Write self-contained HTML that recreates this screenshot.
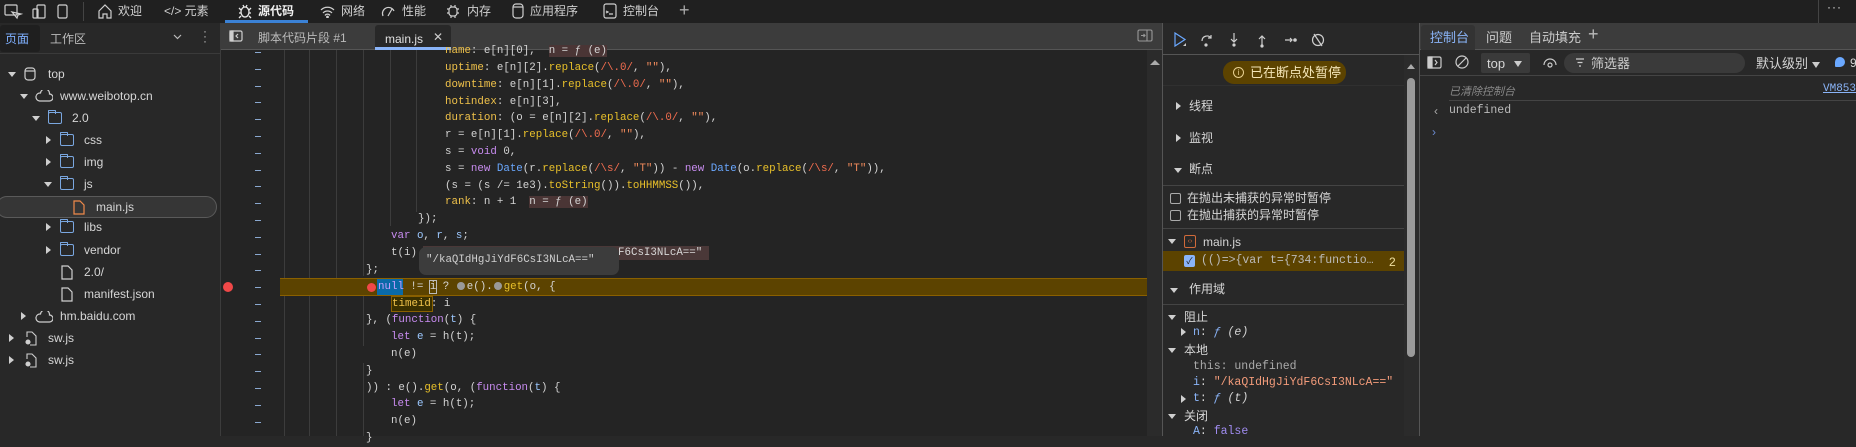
<!DOCTYPE html>
<html><head><meta charset="utf-8">
<style>
*{box-sizing:border-box;margin:0;padding:0}
body{width:1856px;height:436px;overflow:hidden;background:#282828;font-family:"Liberation Sans","Noto Sans CJK SC",sans-serif;color:#d6d6d6;position:relative;font-size:12px}
.a{position:absolute;white-space:nowrap}
.ui{font-size:12px;line-height:14px}
.code{position:absolute;font-family:"Liberation Mono",monospace;font-size:10.8px;line-height:16.8px;white-space:pre;color:#d4d4d4}
.k{color:#c88cf0}.p{color:#f0c24a}.m{color:#e8c02a}.r{color:#f26d4f}.s{color:#f28b5c}.b{color:#6aa8ff}.v{color:#9cc8ff}
.dash{position:absolute;left:255px;width:6px;height:1px;background:#8aa8d0}
.guide{position:absolute;width:1px;background:#3c3c3c}
.tri{position:absolute;width:0;height:0;border-left:5px solid #cfcfcf;border-top:4px solid transparent;border-bottom:4px solid transparent}
.trid{position:absolute;width:0;height:0;border-top:5px solid #cfcfcf;border-left:4px solid transparent;border-right:4px solid transparent}
.fold{position:absolute;width:14px;height:12px;border:1.3px solid #7aa7e0;border-radius:2px}
.fold:before{content:"";position:absolute;left:-1px;top:-3px;width:6px;height:3px;border:1.3px solid #7aa7e0;border-bottom:none;border-radius:1px 1px 0 0}
.dot{display:inline-block;width:8px;height:8px;border-radius:50%;background:#999;margin:0 2px 0 1px;vertical-align:-1px}
svg{position:absolute}
</style></head><body>
<!-- top bar -->
<div class="a" style="left:0;top:0;width:1856px;height:23px;background:#202020"></div>
<svg style="left:4px;top:4px" width="76" height="16" fill="none" stroke="#cfcfcf" stroke-width="1.2">
<rect x="1" y="1" width="12" height="10" rx="1"/><path d="M8 8l5 6 1-3 3-1z"/>
<rect x="33" y="1" width="8" height="13" rx="1"/><rect x="29" y="5" width="5" height="9" rx="1"/>
<rect x="54" y="1" width="9" height="13" rx="1.5"/></svg>
<div class="a" style="left:83px;top:2px;width:1px;height:19px;background:#444"></div>
<svg style="left:98px;top:4px" width="14" height="15" fill="none" stroke="#cfcfcf" stroke-width="1.2"><path d="M1 7l6-6 6 6v7H9v-4H5v4H1z"/></svg>
<div class="a ui" style="left:118px;top:4px;color:#cfcfcf">欢迎</div>
<div class="a ui" style="left:164px;top:4px;color:#cfcfcf">&lt;/&gt; 元素</div>
<svg style="left:238px;top:3px" width="14" height="16" fill="none" stroke="#e8e8e8" stroke-width="1.3"><ellipse cx="7" cy="9" rx="4" ry="5"/><path d="M1 5l2 2M13 5l-2 2M1 10h2M11 10h2M1 15l2-2M13 15l-2-2M5 2l1 2M9 2l-1 2"/></svg>
<div class="a ui" style="left:258px;top:4px;color:#f0f0f0;font-weight:bold">源代码</div>
<div class="a" style="left:225px;top:20px;width:83px;height:3px;background:#3b82d6"></div>
<svg style="left:320px;top:5px" width="15" height="13" fill="none" stroke="#cfcfcf" stroke-width="1.2"><path d="M1 5a9 9 0 0 1 13 0M3 8a6 6 0 0 1 9 0M5 10.5a3 3 0 0 1 5 0"/><circle cx="7.5" cy="12" r="0.8" fill="#cfcfcf"/></svg>
<div class="a ui" style="left:341px;top:4px;color:#cfcfcf">网络</div>
<svg style="left:381px;top:5px" width="15" height="13" fill="none" stroke="#cfcfcf" stroke-width="1.2"><path d="M2 11a6 6 0 0 1 11-5M7 11l4-7"/></svg>
<div class="a ui" style="left:402px;top:4px;color:#cfcfcf">性能</div>
<svg style="left:446px;top:4px" width="14" height="15" fill="none" stroke="#cfcfcf" stroke-width="1.2"><rect x="3" y="3" width="8" height="9" rx="3"/><path d="M1 5h2M1 9h2M11 5h2M11 9h2M5 1v2M9 1v2M5 12v2M9 12v2"/></svg>
<div class="a ui" style="left:467px;top:4px;color:#cfcfcf">内存</div>
<svg style="left:512px;top:3px" width="12" height="16" fill="none" stroke="#cfcfcf" stroke-width="1.2"><rect x="1" y="1" width="10" height="14" rx="3"/><path d="M1 4h10"/></svg>
<div class="a ui" style="left:530px;top:4px;color:#cfcfcf">应用程序</div>
<svg style="left:603px;top:3px" width="14" height="16" fill="none" stroke="#cfcfcf" stroke-width="1.2"><rect x="1" y="1" width="12" height="14" rx="2"/><path d="M3 10l2-1-2-1M6 11h4"/></svg>
<div class="a ui" style="left:623px;top:4px;color:#cfcfcf">控制台</div>
<div class="a" style="left:679px;top:0px;font-size:18px;color:#aaa">+</div>
<div class="a" style="left:1818px;top:0;width:1px;height:23px;background:#444"></div>
<div class="a" style="left:1827px;top:0;color:#ddd;font-size:12px;letter-spacing:1px">···</div>

<!-- left panel -->
<div class="a" style="left:0;top:23px;width:220px;height:413px;background:#282828"></div>
<div class="a" style="left:0;top:25px;width:40px;height:27px;background:#1f1f1f;border-radius:3px"></div>
<div class="a ui" style="left:5px;top:32px;color:#7fb0ff">页面</div>
<div class="a ui" style="left:50px;top:32px;color:#bbb">工作区</div>
<svg style="left:173px;top:34px" width="9" height="6" fill="none" stroke="#bbb" stroke-width="1.2"><path d="M1 1l3.5 3.5L8 1"/></svg>
<div class="a" style="left:203px;top:29px;color:#bbb;font-size:12px;line-height:5px">·<br>·<br>·</div>
<div class="a" style="left:220px;top:23px;width:1px;height:413px;background:#3c3c3c"></div>
<div class="a" style="left:0;top:53px;width:220px;height:1px;background:#3a3a3a"></div>
<!-- tree -->
<div class="trid" style="left:8px;top:72px"></div>
<svg style="left:24px;top:67px" width="12" height="14" fill="none" stroke="#cfcfcf" stroke-width="1.2"><rect x="1" y="1" width="10" height="12" rx="3"/><path d="M1 4h10"/></svg>
<div class="a ui" style="left:48px;top:67px">top</div>
<div class="trid" style="left:20px;top:94px"></div>
<svg style="left:35px;top:90px" width="18" height="12" fill="none" stroke="#cfcfcf" stroke-width="1.2"><path d="M4.5 11h10a3.5 3.5 0 0 0 0-7 4.5 4.5 0 0 0-9-1A4 4 0 0 0 4.5 11z"/></svg>
<div class="a ui" style="left:60px;top:89px">www.weibotop.cn</div>
<div class="trid" style="left:32px;top:116px"></div>
<div class="fold" style="left:48px;top:112px"></div>
<div class="a ui" style="left:72px;top:111px">2.0</div>
<div class="tri" style="left:46px;top:136px"></div>
<div class="fold" style="left:60px;top:134px"></div>
<div class="a ui" style="left:84px;top:133px">css</div>
<div class="tri" style="left:46px;top:158px"></div>
<div class="fold" style="left:60px;top:156px"></div>
<div class="a ui" style="left:84px;top:155px">img</div>
<div class="trid" style="left:44px;top:182px"></div>
<div class="fold" style="left:60px;top:178px"></div>
<div class="a ui" style="left:84px;top:177px">js</div>
<div class="a" style="left:-4px;top:196px;width:221px;height:22px;background:#363636;border:1px solid #5a5a5a;border-radius:11px"></div>
<svg style="left:73px;top:200px" width="12" height="15" fill="none" stroke="#f08a4a" stroke-width="1.2"><path d="M1 1h6l4 4v9H1z"/></svg>
<div class="a ui" style="left:96px;top:200px">main.js</div>
<div class="tri" style="left:46px;top:223px"></div>
<div class="fold" style="left:60px;top:221px"></div>
<div class="a ui" style="left:84px;top:220px">libs</div>
<div class="tri" style="left:46px;top:246px"></div>
<div class="fold" style="left:60px;top:244px"></div>
<div class="a ui" style="left:84px;top:243px">vendor</div>
<svg style="left:61px;top:265px" width="12" height="15" fill="none" stroke="#cfcfcf" stroke-width="1.2"><path d="M1 1h6l4 4v9H1z"/></svg>
<div class="a ui" style="left:84px;top:265px">2.0/</div>
<svg style="left:61px;top:287px" width="12" height="15" fill="none" stroke="#cfcfcf" stroke-width="1.2"><path d="M1 1h6l4 4v9H1z"/></svg>
<div class="a ui" style="left:84px;top:287px">manifest.json</div>
<div class="tri" style="left:21px;top:312px"></div>
<svg style="left:35px;top:311px" width="18" height="12" fill="none" stroke="#cfcfcf" stroke-width="1.2"><path d="M4.5 11h10a3.5 3.5 0 0 0 0-7 4.5 4.5 0 0 0-9-1A4 4 0 0 0 4.5 11z"/></svg>
<div class="a ui" style="left:60px;top:309px">hm.baidu.com</div>
<div class="tri" style="left:9px;top:334px"></div>
<svg style="left:24px;top:331px" width="13" height="15" fill="none" stroke="#cfcfcf" stroke-width="1.1"><path d="M3 6V1h5l4 4v9H6"/><circle cx="4" cy="11" r="2" fill="#cfcfcf"/></svg>
<div class="a ui" style="left:48px;top:331px">sw.js</div>
<div class="tri" style="left:9px;top:356px"></div>
<svg style="left:24px;top:353px" width="13" height="15" fill="none" stroke="#cfcfcf" stroke-width="1.1"><path d="M3 6V1h5l4 4v9H6"/><circle cx="4" cy="11" r="2" fill="#cfcfcf"/></svg>
<div class="a ui" style="left:48px;top:353px">sw.js</div>

<!-- editor -->
<div class="a" style="left:221px;top:23px;width:941px;height:27px;background:#3c3c3c;border-bottom:1px solid #555"></div>
<svg style="left:229px;top:30px" width="14" height="12" fill="none" stroke="#cfcfcf" stroke-width="1.2"><rect x="1" y="1" width="12" height="10" rx="1.5"/><path d="M9 4l-2 2 2 2" /><path d="M1 1h3v10H1z" fill="#cfcfcf"/></svg>
<div class="a ui" style="left:258px;top:31px;color:#bbb">脚本代码片段 #1</div>
<div class="a" style="left:375px;top:25px;width:76px;height:25px;background:#282828;border-radius:3px 3px 0 0"></div>
<div class="a" style="left:375px;top:47px;width:76px;height:3px;background:#8ab4f8"></div>
<div class="a ui" style="left:385px;top:32px;color:#e0e0e0">main.js</div>
<div class="a" style="left:433px;top:30px;color:#ccc;font-size:12px">✕</div>
<svg style="left:1137px;top:29px" width="16" height="13" fill="none" stroke="#999" stroke-width="1.1"><rect x="1" y="1" width="14" height="11" rx="1.5"/><path d="M10 1v11" /><path d="M4 6.5h4M6.5 5l1.5 1.5L6.5 8"/></svg>
<div class="a" style="left:221px;top:50px;width:926px;height:386px;background:#242424"></div>
<div class="a" style="left:1147px;top:50px;width:15px;height:386px;background:#2b2b2b"></div>
<div class="a" style="left:1150px;top:60px;width:0;height:0;border-bottom:5px solid #aaa;border-left:5px solid transparent;border-right:5px solid transparent"></div>
<div class="a" style="left:1162px;top:23px;width:1px;height:413px;background:#555"></div>
<!-- guides -->
<div class="guide" style="left:284px;top:50px;height:386px"></div>
<div class="guide" style="left:309px;top:50px;height:386px"></div>
<div class="guide" style="left:336px;top:50px;height:386px"></div>
<div class="guide" style="left:363px;top:50px;height:226px"></div>
<div class="guide" style="left:390px;top:50px;height:176px"></div>
<div class="guide" style="left:416px;top:50px;height:162px"></div>
<div class="guide" style="left:363px;top:296px;height:50px"></div>
<div class="guide" style="left:363px;top:363px;height:73px"></div>
<!-- dashes -->
<div class="dash" style="top:52px"></div><div class="dash" style="top:69px"></div><div class="dash" style="top:86px"></div><div class="dash" style="top:102px"></div><div class="dash" style="top:119px"></div><div class="dash" style="top:136px"></div><div class="dash" style="top:153px"></div><div class="dash" style="top:170px"></div><div class="dash" style="top:186px"></div><div class="dash" style="top:203px"></div><div class="dash" style="top:220px"></div><div class="dash" style="top:237px"></div><div class="dash" style="top:254px"></div><div class="dash" style="top:270px"></div><div class="dash" style="top:287px"></div><div class="dash" style="top:304px"></div><div class="dash" style="top:321px"></div><div class="dash" style="top:338px"></div><div class="dash" style="top:354px"></div><div class="dash" style="top:371px"></div><div class="dash" style="top:388px"></div><div class="dash" style="top:405px"></div><div class="dash" style="top:422px"></div>
<!-- highlighted line -->
<div class="a" style="left:280px;top:278px;width:867px;height:18px;background:#5c4300;border-top:1px solid #8a6000;border-bottom:1px solid #8a6000"></div>
<div class="a" style="left:223px;top:282px;width:10px;height:10px;border-radius:50%;background:#f04848"></div>
<div class="a" style="left:377px;top:279px;width:26px;height:16px;background:#0a6aa8"></div>
<div class="a" style="left:391px;top:296px;width:42px;height:16px;border:1px solid #8a6000;background:#3a3000"></div>
<!-- code lines -->
<div class="code" style="left:445px;top:43px"><span class="p">name</span>: e[n][0],  <span style="background:#4a3535">n = ƒ (e)</span></div>
<div class="code" style="left:445px;top:60px"><span class="p">uptime</span>: e[n][2].<span class="m">replace</span>(<span class="r">/\.0/</span>, <span class="s">""</span>),</div>
<div class="code" style="left:445px;top:77px"><span class="p">downtime</span>: e[n][1].<span class="m">replace</span>(<span class="r">/\.0/</span>, <span class="s">""</span>),</div>
<div class="code" style="left:445px;top:94px"><span class="p">hotindex</span>: e[n][3],</div>
<div class="code" style="left:445px;top:110px"><span class="p">duration</span>: (o = e[n][2].<span class="m">replace</span>(<span class="r">/\.0/</span>, <span class="s">""</span>),</div>
<div class="code" style="left:445px;top:127px">r = e[n][1].<span class="m">replace</span>(<span class="r">/\.0/</span>, <span class="s">""</span>),</div>
<div class="code" style="left:445px;top:144px">s = <span class="k">void</span> 0,</div>
<div class="code" style="left:445px;top:161px">s = <span class="k">new</span> <span class="b">Date</span>(r.<span class="m">replace</span>(<span class="r">/\s/</span>, <span class="s">"T"</span>)) - <span class="k">new</span> <span class="b">Date</span>(o.<span class="m">replace</span>(<span class="r">/\s/</span>, <span class="s">"T"</span>)),</div>
<div class="code" style="left:445px;top:178px">(s = (s /= 1e3).<span class="m">toString</span>()).<span class="m">toHHMMSS</span>()),</div>
<div class="code" style="left:445px;top:194px"><span class="p">rank</span>: n + 1  <span style="background:#4a3535">n = ƒ (e)</span></div>
<div class="code" style="left:418px;top:211px">});</div>
<div class="code" style="left:391px;top:228px"><span class="k">var</span> <span class="v">o</span>, <span class="v">r</span>, <span class="v">s</span>;</div>
<div class="a" style="left:423px;top:246px;width:286px;height:14px;background:#4a3838"></div>
<div class="a" style="left:618px;top:246px;font-family:'Liberation Mono',monospace;font-size:10.8px;line-height:14px;color:#d8d8d8">F6CsI3NLcA=="</div>
<div class="code" style="left:391px;top:245px">t(i)</div>
<div class="code" style="left:366px;top:262px">};</div>
<div class="a" style="left:419px;top:247px;width:200px;height:28px;background:#3c3c3c;border-radius:7px"></div>
<div class="code" style="left:426px;top:252px;color:#cfcfcf">"/kaQIdHgJiYdF6CsI3NLcA=="</div>
<div class="a" style="left:367px;top:283px;width:9px;height:9px;border-radius:50%;background:#f04848"></div>
<div class="code" style="left:378px;top:279px"><span style="color:#c8a0ff">null</span> != <span style="outline:1px solid #bbb">i</span> ? <span class="dot"></span>e().<span class="dot"></span><span class="m">get</span>(o, {</div>
<div class="code" style="left:392px;top:296px"><span class="p">timeid</span>: i</div>
<div class="code" style="left:366px;top:312px">}, (<span class="k">function</span>(<span class="v">t</span>) {</div>
<div class="code" style="left:391px;top:329px"><span class="k">let</span> <span class="v">e</span> = h(t);</div>
<div class="code" style="left:391px;top:346px">n(e)</div>
<div class="code" style="left:366px;top:363px">}</div>
<div class="code" style="left:366px;top:380px">)) : e().<span class="m">get</span>(o, (<span class="k">function</span>(<span class="v">t</span>) {</div>
<div class="code" style="left:391px;top:396px"><span class="k">let</span> <span class="v">e</span> = h(t);</div>
<div class="code" style="left:391px;top:413px">n(e)</div>
<div class="code" style="left:366px;top:430px">}</div>

<!-- debugger panel -->
<div class="a" style="left:1163px;top:23px;width:256px;height:413px;background:#282828"></div>
<svg style="left:1172px;top:32px" width="160" height="16" fill="none" stroke="#cfcfcf" stroke-width="1.2">
<path d="M3 1v13l10-6.5z" stroke="#6aa8ff"/><path d="M11 14l3-3v3z" fill="#ccc" stroke="none"/>
<path d="M30 9a5 5 0 0 1 9-3M39 3v3h-3"/><circle cx="34" cy="13" r="1" fill="#ccc"/>
<path d="M62 1v9M59 7l3 3 3-3"/><circle cx="62" cy="13" r="1" fill="#ccc"/>
<path d="M90 13V4M87 7l3-3 3 3"/><circle cx="90" cy="14" r="1" fill="#ccc"/>
<path d="M113 8h7M118 6l2 2-2 2"/><circle cx="123" cy="8" r="1.2" fill="#ccc"/>
<circle cx="146" cy="8" r="5.5"/><path d="M142 2l8 12"/></svg>
<div class="a" style="left:1163px;top:54px;width:256px;height:1px;background:#555"></div>
<div class="a" style="left:1404px;top:55px;width:15px;height:381px;background:#2b2b2b"></div>
<div class="a" style="left:1407px;top:78px;width:8px;height:279px;border-radius:4px;background:#9a9a9a"></div>
<div class="a" style="left:1407px;top:64px;width:0;height:0;border-bottom:5px solid #aaa;border-left:4px solid transparent;border-right:4px solid transparent"></div>
<div class="a" style="left:1223px;top:61px;width:123px;height:23px;border-radius:11px;background:#5c4300"></div>
<div class="a" style="left:1233px;top:67px;width:11px;height:11px;border:1px solid #e8d090;border-radius:50%;font-size:8px;line-height:9px;text-align:center;color:#e8d090">i</div>
<div class="a ui" style="left:1250px;top:66px;color:#f4e6b8;font-size:13px">已在断点处暂停</div>
<div class="a" style="left:1163px;top:85px;width:241px;height:1px;background:#303030"></div>
<div class="tri" style="left:1176px;top:102px"></div><div class="a ui" style="left:1189px;top:99px">线程</div>
<div class="tri" style="left:1176px;top:134px"></div><div class="a ui" style="left:1189px;top:131px">监视</div>
<div class="trid" style="left:1174px;top:168px"></div><div class="a ui" style="left:1189px;top:162px">断点</div>
<div class="a" style="left:1163px;top:185px;width:241px;height:1px;background:#444"></div>
<div class="a" style="left:1170px;top:193px;width:11px;height:11px;border:1px solid #aaa;border-radius:2px"></div>
<div class="a ui" style="left:1187px;top:191px;font-size:12px">在抛出未捕获的异常时暂停</div>
<div class="a" style="left:1170px;top:210px;width:11px;height:11px;border:1px solid #aaa;border-radius:2px"></div>
<div class="a ui" style="left:1187px;top:208px;font-size:12px">在抛出捕获的异常时暂停</div>
<div class="a" style="left:1163px;top:228px;width:241px;height:1px;background:#444"></div>
<div class="trid" style="left:1168px;top:239px"></div>
<div class="a" style="left:1184px;top:235px;width:12px;height:13px;border:1px solid #d06a3a;border-radius:2px;font-size:7px;color:#d06a3a;text-align:center;line-height:11px">‹›</div>
<div class="a ui" style="left:1203px;top:235px">main.js</div>
<div class="a" style="left:1163px;top:251px;width:241px;height:20px;background:#5c4300"></div>
<div class="a" style="left:1184px;top:255px;width:11px;height:12px;background:#8ab4f8;border-radius:2px;color:#1a1a1a;font-size:9px;line-height:12px;text-align:center">✓</div>
<div class="a" style="left:1201px;top:254px;font-family:'Liberation Mono',monospace;font-size:11.5px;color:#bbb">(()=&gt;{var t={734:functio…</div>
<div class="a ui" style="left:1389px;top:255px;color:#f0e0a0">2</div>
<div class="trid" style="left:1170px;top:288px"></div><div class="a ui" style="left:1189px;top:282px">作用域</div>
<div class="a" style="left:1163px;top:304px;width:241px;height:1px;background:#444"></div>
<div class="trid" style="left:1168px;top:315px"></div><div class="a ui" style="left:1184px;top:310px">阻止</div>
<div class="tri" style="left:1181px;top:328px"></div>
<div class="a" style="left:1193px;top:326px;font-family:'Liberation Mono',monospace;font-size:11.5px"><span style="color:#8ab4f8">n</span>: <i style="color:#8ab4f8">ƒ</i> <i>(e)</i></div>
<div class="trid" style="left:1168px;top:348px"></div><div class="a ui" style="left:1184px;top:343px">本地</div>
<div class="a" style="left:1193px;top:360px;font-family:'Liberation Mono',monospace;font-size:11.5px;color:#aaa">this: undefined</div>
<div class="a" style="left:1193px;top:376px;font-family:'Liberation Mono',monospace;font-size:11.5px"><span style="color:#8ab4f8">i</span>: <span style="color:#f29b7a">"/kaQIdHgJiYdF6CsI3NLcA=="</span></div>
<div class="tri" style="left:1181px;top:395px"></div>
<div class="a" style="left:1193px;top:392px;font-family:'Liberation Mono',monospace;font-size:11.5px"><span style="color:#8ab4f8">t</span>: <i style="color:#8ab4f8">ƒ</i> <i>(t)</i></div>
<div class="trid" style="left:1168px;top:414px"></div><div class="a ui" style="left:1184px;top:409px">关闭</div>
<div class="a" style="left:1193px;top:425px;font-family:'Liberation Mono',monospace;font-size:11.5px"><span style="color:#8ab4f8">A</span>: <span style="color:#a08cf0">false</span></div>
<div class="a" style="left:1419px;top:23px;width:1px;height:413px;background:#555"></div>

<!-- console -->
<div class="a" style="left:1420px;top:23px;width:436px;height:27px;background:#3c3c3c;border-bottom:1px solid #555"></div>
<div class="a" style="left:1421px;top:25px;width:54px;height:25px;background:#333;border-radius:3px 3px 0 0"></div>
<div class="a ui" style="left:1430px;top:31px;color:#8ab4f8;font-size:13px">控制台</div>
<div class="a ui" style="left:1486px;top:31px;color:#ccc;font-size:13px">问题</div>
<div class="a ui" style="left:1529px;top:31px;color:#ccc;font-size:13px">自动填充</div>
<div class="a" style="left:1588px;top:24px;color:#bbb;font-size:18px">+</div>
<div class="a" style="left:1420px;top:50px;width:436px;height:26px;background:#282828;border-bottom:1px solid #444"></div>
<svg style="left:1427px;top:56px" width="15" height="13" fill="none" stroke="#ccc" stroke-width="1.2"><rect x="1" y="1" width="13" height="11" rx="1.5"/><path d="M1 1h4v11H1z" fill="#ccc"/><path d="M8 4l2 2.5L8 9"/></svg>
<svg style="left:1455px;top:55px" width="14" height="14" fill="none" stroke="#ccc" stroke-width="1.2"><circle cx="7" cy="7" r="6"/><path d="M3 11l8-8"/></svg>
<div class="a" style="left:1481px;top:53px;width:49px;height:20px;background:#3a3a3a;border-radius:2px"></div>
<div class="a ui" style="left:1487px;top:57px;font-size:13px">top</div>
<div class="a" style="left:1514px;top:61px;width:0;height:0;border-top:6px solid #ccc;border-left:4px solid transparent;border-right:4px solid transparent"></div>
<svg style="left:1543px;top:56px" width="14" height="12" fill="none" stroke="#ccc" stroke-width="1.2"><path d="M1 9a6 6 0 0 1 12 0"/><circle cx="7" cy="9" r="2"/></svg>
<div class="a" style="left:1564px;top:53px;width:181px;height:20px;background:#3a3a3a;border-radius:10px"></div>
<svg style="left:1575px;top:58px" width="10" height="9" fill="none" stroke="#ccc" stroke-width="1.2"><path d="M1 1h8M2.5 4.5h5M4 8h2"/></svg>
<div class="a ui" style="left:1591px;top:57px;color:#ccc;font-size:13px">筛选器</div>
<div class="a ui" style="left:1756px;top:57px;font-size:13px">默认级别</div>
<div class="a" style="left:1812px;top:62px;width:0;height:0;border-top:6px solid #ccc;border-left:4px solid transparent;border-right:4px solid transparent"></div>
<div class="a" style="left:1835px;top:57px;width:10px;height:10px;border-radius:50% 50% 50% 1px;background:#6aa8ff"></div>
<div class="a ui" style="left:1850px;top:56px">9</div>
<div class="a" style="left:1449px;top:83px;font-size:11px;font-style:italic;color:#888">已清除控制台</div>
<div class="a" style="left:1823px;top:83px;font-family:'Liberation Mono',monospace;font-size:11px;color:#8ab4f8;text-decoration:underline">VM853</div>
<div class="a" style="left:1449px;top:100px;width:407px;height:1px;background:#444"></div>
<div class="a" style="left:1434px;top:104px;font-size:12px;color:#aaa">‹</div>
<div class="a" style="left:1449px;top:104px;font-family:'Liberation Mono',monospace;font-size:11.5px;color:#bbb">undefined</div>
<div class="a" style="left:1432px;top:125px;font-size:12px;color:#6a8ad0">›</div>
</body></html>
